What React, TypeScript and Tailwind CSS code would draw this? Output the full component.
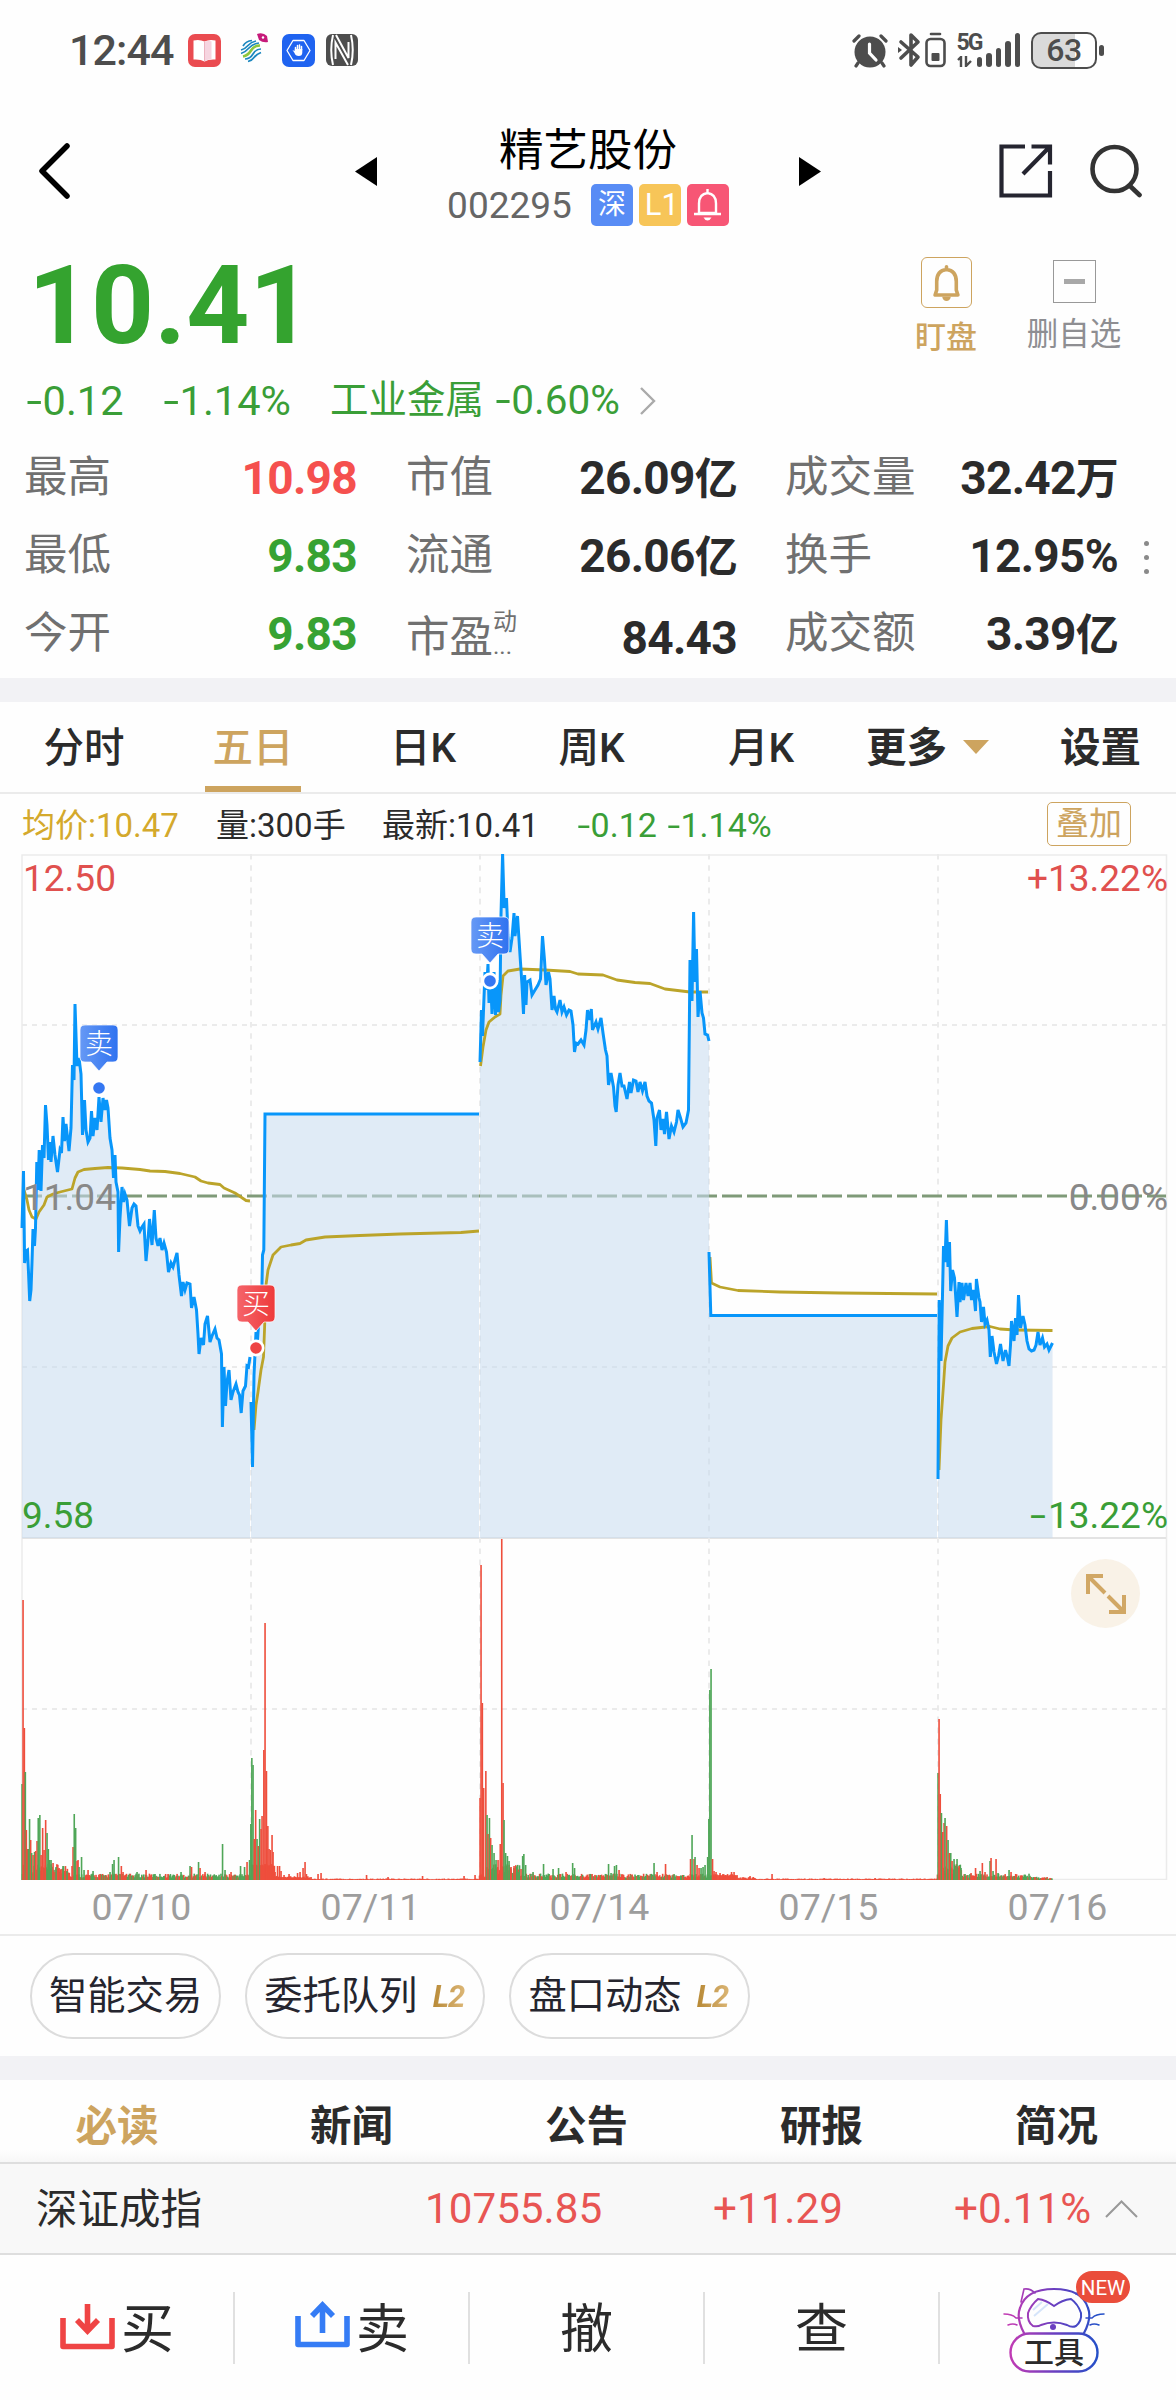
import type { ReactNode } from "react";

type Pt = [number, number];

// chart space is in page pixels: x 22..1166, price pane 854..1538, volume pane 1538..1880
const prices: Pt[][] = [
  [
    [22, 1228], [23.5, 1171], [24.6, 1263], [26, 1251], [27.5, 1250], [28.5, 1272], [29.7, 1301], [31, 1290], [32, 1262], [33, 1229], [34.5, 1246], [35.5, 1228],
    [36.8, 1162], [38, 1190], [39.2, 1150], [41, 1191], [42.5, 1145], [44, 1158], [45.5, 1105], [47, 1125], [48.5, 1160], [50, 1142], [51, 1162], [53, 1136],
    [55, 1155], [57.5, 1172], [60, 1150], [61.5, 1153], [63, 1117], [64.5, 1141], [66, 1124], [69, 1151], [71, 1128], [72.5, 1065], [74, 1080], [75, 1004],
    [77, 1066], [79, 1058], [81, 1074], [82.5, 1135], [84.5, 1100], [86, 1130], [88, 1142], [90, 1138], [91.5, 1111], [93, 1136], [95, 1118], [97, 1130],
    [99, 1097], [101, 1122], [103, 1098], [105, 1110], [106.5, 1100], [108, 1108], [110, 1138], [112, 1150], [113.5, 1178], [115, 1155], [116, 1182], [118, 1192],
    [118.6, 1252], [120, 1218], [122, 1187], [123.5, 1202], [125, 1194], [127, 1200], [129.5, 1226], [132, 1208], [134, 1204], [136, 1206], [138, 1226],
    [140, 1231], [142, 1227], [144, 1224], [146, 1261], [148, 1240], [149.5, 1219], [152, 1245], [154.3, 1210], [156, 1238], [158, 1246], [160, 1238], [162, 1250],
    [164, 1243], [166.5, 1252], [168.5, 1272], [171, 1263], [173, 1267], [175, 1260], [177, 1253], [179, 1275], [181.5, 1296], [183, 1282], [185, 1290],
    [187, 1283], [190, 1284], [191.5, 1308], [194, 1297], [196.5, 1310], [198, 1334], [199, 1354], [201, 1338], [203.5, 1345], [205, 1324], [207.5, 1316],
    [210, 1342], [212, 1336], [215, 1329], [217, 1338], [219, 1340], [221.5, 1354], [222.4, 1427], [224, 1367], [225.5, 1406], [227, 1382], [229, 1370],
    [231, 1400], [233, 1392], [236, 1384], [238, 1392], [239.5, 1395], [241.2, 1413], [243, 1391], [245.5, 1386], [247, 1366], [248.5, 1367], [250, 1357],
  ],
  [[251, 1402], [252.5, 1467], [254, 1375], [256, 1332], [257.5, 1340], [259, 1318], [260.5, 1322], [262, 1284], [262.5, 1255], [263.8, 1250], [265, 1114], [479, 1114]],
  [
    [480, 1062], [481.5, 1010], [482.5, 1036], [485, 972], [486.5, 990], [488, 964], [489, 1003], [490.5, 976], [492, 1014], [494, 972], [495.5, 1015], [497, 980],
    [498.5, 1012], [500, 1000], [501, 915], [502.6, 854], [504.2, 908], [506.5, 898], [508, 935], [510, 952], [512, 938], [514, 913], [515, 936], [517.5, 916],
    [520, 955], [522, 985], [523.5, 1014], [524.6, 975], [526, 1005], [527, 982], [530, 980], [532, 995], [535, 990], [538, 985], [540.5, 979], [542.5, 936],
    [544.5, 960], [546, 985], [548.5, 972], [550, 979], [552, 1010], [554, 996], [555.5, 1009], [557, 1012], [560, 1000], [562, 1012], [564, 1007], [566.5, 1015],
    [569, 1010], [571, 1011], [573, 1025], [574.5, 1052], [576, 1043], [578, 1044], [581, 1040], [584, 1045], [586, 1030], [587.5, 1010], [590, 1020], [591.3, 1009],
    [592.5, 1030], [596, 1022], [598, 1029], [601, 1018], [603, 1033], [605.5, 1050], [607, 1056], [608.5, 1085], [611, 1073], [613.5, 1087], [615, 1106],
    [616.2, 1112], [618, 1085], [620, 1073], [622, 1086], [624, 1086], [627, 1099], [629.5, 1082], [631, 1093], [633.5, 1080], [636, 1081], [638, 1092], [640, 1082],
    [642.5, 1091], [645, 1082], [647, 1096], [649, 1101], [651.5, 1103], [654, 1120], [655.8, 1146], [657, 1118], [659.5, 1110], [661, 1130], [663, 1119], [664.5, 1134],
    [666.5, 1112], [669, 1139], [671.5, 1126], [674, 1132], [676.5, 1122], [678, 1110], [680.5, 1118], [683, 1127], [686, 1123], [688.5, 1110], [690, 960],
    [692, 1001], [693.6, 912], [695, 982], [696.5, 949], [698, 1017], [700, 991], [702, 1013], [703.5, 1018], [705, 1034], [707.5, 1035], [709, 1041],
  ],
  [[709, 1252], [710.8, 1315.5], [937, 1315.5]],
  [
    [938, 1479], [939.2, 1300], [941, 1361], [942.5, 1295], [943.5, 1246], [945, 1262], [946.4, 1220], [948, 1267], [949.5, 1242], [950.7, 1291], [952.5, 1270],
    [954.5, 1278], [957, 1317], [959, 1282], [960, 1302], [962, 1283], [963.5, 1300], [966, 1283], [968, 1296], [970, 1283], [971.5, 1300], [973.5, 1290],
    [975.5, 1311], [976.4, 1279], [979, 1298], [980, 1302], [981.5, 1322], [983.5, 1307], [985, 1324], [987, 1320], [989, 1330], [990.3, 1357], [992, 1336],
    [994, 1352], [996.5, 1364], [998.5, 1356], [1000.5, 1344], [1003, 1361], [1005.5, 1350], [1007.5, 1358], [1009, 1366], [1010.5, 1345], [1011.5, 1321],
    [1014, 1341], [1015.5, 1318], [1017, 1335], [1018.5, 1295], [1020.5, 1328], [1023, 1316], [1025, 1325], [1027, 1341], [1029, 1349], [1031.5, 1351],
    [1034, 1350], [1036, 1345], [1038, 1332], [1040, 1345], [1042.5, 1338], [1044.5, 1347], [1047, 1344], [1049, 1350], [1052.5, 1343],
  ],
];

const averages: Pt[][] = [
  [
    [24, 1190], [27, 1200], [29, 1210], [32, 1217], [36, 1219], [39, 1212], [44, 1205], [47, 1197], [53, 1194], [60, 1192], [72, 1189], [75, 1178], [78, 1172], [84, 1169.5],
    [95, 1168.5], [108, 1167.5], [122, 1168], [140, 1169.5], [150, 1171], [165, 1171.5], [180, 1173.5], [195, 1177], [201, 1181], [208, 1183], [220, 1184.5],
    [224, 1188], [235, 1193], [246, 1200.5], [250, 1201],
  ],
  [
    [254, 1430], [256, 1405], [258, 1392], [261, 1370], [263.5, 1357], [264.5, 1330], [266, 1285], [268, 1270], [273, 1255], [281, 1247], [291, 1245], [300, 1243.5], [306, 1240],
    [325, 1237], [360, 1235.5], [400, 1234], [440, 1233], [461, 1232.5], [479, 1231],
  ],
  [
    [480.5, 1066], [483, 1047], [486, 1030], [489, 1022], [495, 1017], [500, 1014], [501, 995], [503, 976], [508, 971], [520, 969], [545, 970], [570, 971.5],
    [578, 974], [603, 975], [617, 980], [635, 982.5], [650, 983.5], [665, 989], [690, 992], [708, 992],
  ],
  [[710, 1257], [711.5, 1283], [720, 1287], [738, 1290.5], [780, 1292], [840, 1293], [937, 1294]],
  [
    [939, 1470], [941, 1420], [943.5, 1385], [945, 1362], [948, 1346], [952, 1338], [960, 1332], [972, 1328.5], [990, 1326.5], [1000, 1329], [1015, 1330], [1052.5, 1330.5],
  ],
];

// [x, height, up]
const spikes: [number, number, 0 | 1][] = [
  [22, 96, 0], [23, 280, 1], [24.3, 152, 1], [25.3, 108, 0], [26.3, 50, 1], [27.5, 31, 1], [28.5, 31, 0], [29.5, 61, 0], [30.6, 40, 1], [31.6, 27, 0], [33, 25, 1], [34.5, 28, 0],
  [35.6, 29, 1], [37, 39, 1], [38.2, 62, 0], [39.8, 65, 0], [41, 25, 1], [42.6, 52, 1], [44, 30, 1], [45.6, 60, 1], [47, 47, 0], [48.3, 31, 0], [49.6, 20, 0], [51, 20, 0], [53, 17, 1], [56, 13, 0],
  [59, 12, 1], [61, 11, 1], [63, 14, 0], [67, 9, 0], [72, 14, 1], [73, 33, 1], [74.2, 66, 0], [75.6, 52, 0], [77, 19, 1], [78, 20, 1], [79, 13, 0], [81.5, 23, 0], [84, 10, 0], [88, 10, 1], [93, 9, 0], [100, 6, 1],
  [110, 8, 0], [112.5, 16, 0], [114, 20, 0], [118.5, 23, 0], [121.3, 14, 1], [123, 8, 1], [137, 8, 0], [146, 10, 1], [155, 6, 0], [168, 6, 1], [181, 8, 0], [190, 14, 0], [191.5, 13, 1],
  [198.5, 18, 0], [200, 12, 1], [205, 8, 1], [222.5, 36, 0], [225, 10, 0], [231, 8, 1], [240.5, 14, 0], [244.5, 13, 0], [247, 18, 1], [249.5, 20, 0],
  [250.8, 56, 0], [251.8, 122, 0], [253, 115, 0], [254.2, 41, 1], [255.6, 70, 1], [257, 41, 0], [258.2, 34, 1], [259.6, 61, 0], [261, 51, 1], [262, 64, 1], [263.8, 130, 1],
  [265, 257, 1], [266.4, 109, 1], [267.8, 54, 1], [269, 31, 1], [270.3, 30, 1], [272, 45, 1], [273, 28, 1], [275, 8, 1], [277.5, 14, 1], [279.5, 14, 1], [281, 9, 1], [284, 5, 1], [289, 6, 1],
  [297.5, 7, 1], [300, 8, 1], [303, 12, 1], [305, 18, 1], [306.4, 6, 1], [311, 3, 1], [318, 6, 1], [321, 7, 1], [366.5, 5, 1], [388, 3, 1], [422.5, 4, 1], [464, 4, 1], [475, 5, 1],
  [480, 82, 1], [481, 315, 1], [482.3, 177, 1], [483.6, 92, 1], [485.8, 109, 1], [487, 65, 0], [488, 46, 1], [489.4, 62, 0], [490.6, 42, 1], [492, 35, 0], [494, 27, 0], [496, 20, 0], [498, 20, 1],
  [500.2, 36, 1], [501.7, 341, 1], [503, 97, 1], [504, 60, 0], [505.6, 27, 0], [507.4, 24, 0], [509, 19, 0], [511, 13, 1], [514, 14, 1], [518, 8, 0], [521, 11, 1], [522.6, 24, 0], [523.8, 26, 0], [525.6, 15, 0],
  [533, 8, 0], [543.5, 16, 0], [553, 11, 0], [558.5, 12, 0], [566, 8, 1], [572.6, 17, 0], [574.5, 12, 0], [608.5, 16, 0], [611, 7, 0], [614.5, 14, 0], [616.4, 15, 0], [619, 10, 1],
  [654, 17, 0], [657, 8, 1], [665.5, 16, 1], [690.5, 21, 1], [692, 45, 0], [694, 21, 1], [695, 23, 0], [697, 15, 1], [699, 12, 1], [701, 12, 0], [703, 13, 0], [705, 15, 0], [707.6, 23, 0],
  [708.8, 61, 0], [709.8, 190, 0], [711, 211, 0], [712.5, 21, 1], [714, 9, 1], [716, 8, 1], [720, 7, 1], [725, 5, 1], [731.5, 8, 1], [734, 8, 1], [750, 4, 1], [772, 6, 1], [824, 2, 1], [875, 2, 1],
  [938, 107, 0], [939, 161, 1], [940.2, 86, 1], [941.4, 67, 0], [942.7, 48, 1], [944, 57, 1], [945, 62, 0], [946.6, 54, 1], [948, 40, 0], [949.4, 27, 1], [950.7, 27, 0], [952, 19, 1], [954, 21, 0],
  [957, 21, 0], [959, 14, 1], [961, 12, 0], [965, 6, 0], [971, 7, 1], [975.5, 12, 1], [980, 9, 0], [982.3, 17, 1], [985, 8, 1], [990, 19, 0], [991, 22, 1], [993, 9, 0], [996, 21, 1], [998, 7, 0], [1009, 10, 0], [1011, 8, 1],
];

function floorBars() {
  const bars: [number, number, 0 | 1][] = [];
  for (let i = 0; i < 1080; i++) {
    const x = 22.5 + i * 0.954;
    const r = Math.abs(Math.sin(i * 12.9898) * 43758.5453) % 1;
    const flat = (x > 310 && x < 479) || (x > 757 && x < 937);
    const ramp = (x < 70 || (x > 487 && x < 520) || (x > 940 && x < 962)) ? 10 : (x > 1030 ? 2 : 4);
    if (flat) bars.push([x, 0.5 + r, 1]);
    else if (x > 251 && x < 310) bars.push([x, (x < 275 ? 14 : 2) + r * 2, 1]);
    else if (x > 712 && x < 757) bars.push([x, (x < 738 ? 4 : 1) + r * 2, 1]);
    else bars.push([x, ramp * 0.6 + r * ramp, Math.floor(r * 97) % 2 ? 1 : 0]);
  }
  return bars;
}

const volumes = [...floorBars(), ...spikes];
const line = (pts: Pt[]) => pts.map(([x, y], i) => `${i ? "L" : "M"}${x} ${y}`).join("");
const area = (pts: Pt[]) => `${line(pts)}V1538H${pts[0][0]}Z`;

const stats = [
  [["最高", "10.98", "text-[#f5504e]"], ["市值", "26.09亿", "text-[#2b2b2b]"], ["成交量", "32.42万", "text-[#2b2b2b]"]],
  [["最低", "9.83", "text-[#37a233]"], ["流通", "26.06亿", "text-[#2b2b2b]"], ["换手", "12.95%", "text-[#2b2b2b]"]],
  [["今开", "9.83", "text-[#37a233]"], ["市盈", "84.43", "text-[#2b2b2b]"], ["成交额", "3.39亿", "text-[#2b2b2b]"]],
];

// negative number with a wide minus sign
function Neg({ children }: { children: ReactNode }) {
  return (
    <>
      <span className="inline-block w-[0.4em] text-center scale-x-[1.35]">-</span>
      {children}
    </>
  );
}

function StatusBar() {
  return (
    <div className="h-[100px] flex items-center pl-[69px] pr-[72px] text-[#4d4d4d]">
      <span className="text-[43px] leading-none w-[119px] tracking-[-0.9px] font-medium">12:44</span>
      <svg className="w-[33px] h-[33px]" viewBox="0 0 33 33">
        <rect width="33" height="33" rx="7" fill="#ea4b50" />
        <path d="M5.500 6.500q6-1.500 11 1q5-2.500 11-1v19q-7-.5-11 2q-4-2.500-11-2z" fill="#fff" />
        <path d="M16.500 7.500v20q4-2.500 7-2.300v-18q-4-.7-7 .3z" fill="#f6d5e0" />
        <path d="M16.500 7.500v20" stroke="#e9a4b4" strokeWidth=".8" />
      </svg>
      <svg className="w-[30px] h-[34px] ml-[18px]" viewBox="0 0 30 34" fill="none">
        <path d="M18 1q6-2 10 2l1 6q-5 1-9-2z" fill="#c61a7a" />
        <circle cx="24" cy="4.500" r="1.200" fill="#fff" />
        <path d="M4 13q3-5 9-5.500M2 17q4-1 7-4.500t8-4.500M2 20.500q4-1 8-5.500t10-5" stroke="#1b87bf" strokeWidth="1.700" />
        <path d="M4 23.500q5-1 8-6t9-5" stroke="#8dc63f" strokeWidth="2.600" />
        <path d="M6 26q5 0 8-5t8-5M9 28.500q4-1 6-4t7-5" stroke="#1b87bf" strokeWidth="1.700" />
      </svg>
      <svg className="w-[33px] h-[33px] ml-[13px]" viewBox="0 0 33 33">
        <rect width="33" height="33" rx="7" fill="#1f63f0" />
        <path d="M11 6.500h11l6 10L22 26.500H11L5 16.500z" fill="none" stroke="#fff" strokeWidth="1.300" strokeLinejoin="round" />
        <path d="M13.500 16v-2.500M15.500 15.500v-4M17.500 15.500v-4.500M19.500 16v-3.500" stroke="#fff" strokeWidth="1.500" strokeLinecap="round" />
        <path d="M10.500 16l2 1 .5-2h7.300v3.500q0 3.500-3.500 3.500t-4.300-3z" fill="#fff" />
      </svg>
      <svg className="w-[32px] h-[32px] ml-[11px]" viewBox="0 0 32 32">
        <rect width="32" height="32" rx="6" fill="#4d4d4d" />
        <path d="M7 1q-3.500 15 0 30M25 1q3.500 15 0 30M10 1l12.500 23V8M22 31L9.500 8.500V25" fill="none" stroke="#fff" strokeWidth="2" />
      </svg>
      <svg className="w-[36px] h-[35px] ml-auto" viewBox="0 0 36 35" fill="none" stroke="#4d4d4d" strokeWidth="3.200" strokeLinecap="round">
        <circle cx="18" cy="19" r="15.500" fill="#4d4d4d" stroke="none" />
        <path d="M2 8l5-5M34 8l-5-5M6 30l-2 3M30 30l2 3" />
        <path d="M17.500 11v9l6.500 7" stroke="#fff" />
      </svg>
      <svg className="w-[50px] h-[36px] ml-[10px]" viewBox="0 0 50 36" fill="none" stroke="#4d4d4d" strokeWidth="3.600" strokeLinecap="round" strokeLinejoin="round">
        <path d="M3 10l17 15-7 8V3l7 7L3 26" />
        <path d="M0 15l4 3-4 3z" fill="#4d4d4d" stroke="none" />
        <rect x="28.500" y="7" width="18" height="27" rx="4" strokeWidth="2.600" />
        <path d="M33 2h9" strokeWidth="2.600" />
        <rect x="33.500" y="21" width="8" height="8" rx="1" fill="#4d4d4d" stroke="none" />
      </svg>
      <div className="flex flex-col ml-[9px] h-[34px] w-[24px]">
        <span className="text-[23px] leading-[19px] font-bold tracking-[-2px]">5G</span>
        <svg className="w-[15px] h-[11px] mt-[4px]" viewBox="0 0 15 11" fill="none" stroke="#4d4d4d" strokeWidth="2.400">
          <path d="M1 4l3-3v10M9 0v10l5-5" />
        </svg>
      </div>
      <div className="flex items-end gap-[4px] h-[34px] -ml-[4px]">
        <i className="w-[5.500px] h-[10px] rounded-full bg-[#4d4d4d]" />
        <i className="w-[5.500px] h-[14px] rounded-full bg-[#4d4d4d]" />
        <i className="w-[5.500px] h-[19px] rounded-full bg-[#4d4d4d]" />
        <i className="w-[5.500px] h-[26px] rounded-full bg-[#4d4d4d]" />
        <i className="w-[5.500px] h-[34px] rounded-full bg-[#4d4d4d]" />
      </div>
      <div className="ml-[11px] w-[66px] h-[37px] rounded-[10px] border-[2.500px] border-[#4d4d4d] bg-linear-to-r from-[#dadada] from-68% to-white to-68% flex items-center justify-center">
        <span className="text-[32px] leading-none font-medium tracking-[-0.5px]">63</span>
      </div>
      <i className="ml-[2px] w-[5px] h-[11px] rounded-full bg-[#4d4d4d]" />
    </div>
  );
}

function Bell({ className }: { className: string }) {
  return (
    <svg className={className} viewBox="0 0 30 34" fill="none" stroke="currentColor" strokeWidth="3.300" strokeLinejoin="round" strokeLinecap="round">
      <path d="M15 2.500v2.500M15 5q-9 1-9 11v8l-1.500 4.500h21L24 24v-8q0-10-9-11z" />
      <path d="M11 30h8q-1 4-4 4t-4-4z" fill="currentColor" stroke="none" />
    </svg>
  );
}

function Header() {
  return (
    <header className="h-[142px] flex items-center">
      <svg className="w-[34px] h-[58px] ml-[37px]" viewBox="0 0 34 58" fill="none" stroke="#000" strokeWidth="5.500" strokeLinecap="round" strokeLinejoin="round">
        <path d="M30 4L5 29l25 25" />
      </svg>
      <svg className="w-[22px] h-[29px] ml-[284px]" viewBox="0 0 22 29">
        <path d="M22 0v29L0 14.500z" />
      </svg>
      <div className="ml-[63px] mt-[9px] w-[296px] flex flex-col items-center">
        <h1 className="text-[44.500px] leading-[50px] text-black">精艺股份</h1>
        <div className="mt-[8px] h-[42px] flex items-center gap-[6px] text-white">
          <span className="text-[37px] leading-none text-[#666] mr-[13px] pt-[2px]">002295</span>
          <span className="w-[42px] h-[42px] rounded-[5px] bg-[#588cf5] flex items-center justify-center text-[28px] leading-none">深</span>
          <span className="w-[42px] h-[42px] rounded-[5px] bg-[#f7c558] flex items-center justify-center text-[31px] leading-none pl-[4px]">L1</span>
          <span className="w-[42px] h-[42px] rounded-[5px] bg-[#f75675] flex items-center justify-center">
            <svg className="w-[27px] h-[32px]" viewBox="0 0 27 32" fill="none" stroke="#fff" strokeWidth="2.400">
              <path d="M13.500 0v4M13.500 4q-8.500 1-8.500 10.500V24h17v-9.500Q22 5 13.500 4zM0 25h27" />
              <path d="M9.500 28.500h8q-1.500 3-4 3t-4-3z" fill="#fff" stroke="none" />
            </svg>
          </span>
        </div>
      </div>
      <svg className="w-[22px] h-[29px] ml-[63px]" viewBox="0 0 22 29">
        <path d="M0 0v29l22-14.500z" />
      </svg>
      <svg className="w-[54px] h-[54px] ml-[178px]" viewBox="0 0 54 54" fill="none" stroke="#252530" strokeWidth="4.200">
        <path d="M26 2.500H2.500v49h48.500V27M32.500 2.500H51v18M51 2.500L24 30" />
      </svg>
      <svg className="w-[54px] h-[54px] ml-[37px]" viewBox="0 0 54 54" fill="none" stroke="#333" strokeWidth="4.600" strokeLinecap="round">
        <circle cx="24.500" cy="25" r="22" />
        <path d="M40 42l9.500 9" />
      </svg>
    </header>
  );
}

function Quote() {
  return (
    <section>
      <div className="h-[125px] flex items-start pl-[28px]">
        <div className="text-[110px] leading-[128px] font-bold text-[#34a32f] w-[882px]">10.41</div>
        <div className="w-[72px] pt-[15px] flex flex-col items-center text-[#cda45f]">
          <span className="w-[51px] h-[51px] rounded-[6px] border border-[#cda45f] flex items-center justify-center">
            <Bell className="w-[33px] h-[37px]" />
          </span>
          <span className="mt-[14px] text-[31px] leading-none font-medium">盯盘</span>
        </div>
        <div className="ml-[41px] w-[102px] pt-[18px] flex flex-col items-center text-[#8e8e92]">
          <span className="w-[43px] h-[43px] border-[1.500px] border-[#999] flex items-center justify-center">
            <i className="w-[21px] h-[5px] bg-[#a8a8a8]" />
          </span>
          <span className="mt-[16px] text-[31.500px] leading-none">删自选</span>
        </div>
      </div>
      <div className="h-[66px] pt-[1px] flex items-center pl-[26px] text-[41.500px] leading-none text-[#3a9e37]">
        <span className="w-[137px]"><Neg>0.12</Neg></span>
        <span className="w-[167px]"><Neg>1.14%</Neg></span>
        <span className="text-[38.500px] w-[165px]">工业金属</span>
        <span className="w-[145px] text-[40.500px]"><Neg>0.60%</Neg></span>
        <svg className="w-[16px] h-[28px]" viewBox="0 0 16 28" fill="none" stroke="#aaa" strokeWidth="2.400">
          <path d="M1 1l13 13L1 27" />
        </svg>
      </div>
      <div className="flex mt-[6px] pb-[5px]">
        <div className="flex flex-col">
          {stats.map((row, r) => (
            <div key={r} className="h-[78px] flex items-center leading-none">
              {row.map(([label, value, color], c) => (
                <div key={label} className={c === 0 ? "w-[333px] ml-[24px] mr-[49px] flex items-center justify-between" : c === 1 ? "w-[331px] mr-[48px] flex items-center justify-between" : "w-[333px] flex items-center justify-between"}>
                  <span className="flex items-center text-[43.500px] text-[#707070]">
                    <span className={label === "市盈" ? "pt-[7px]" : ""}>{label}</span>
                    {label === "市盈" && (
                      <span className="flex flex-col text-[24px] leading-[24px] -mt-[1px]">
                        <span>动</span>
                        <span className="h-[24px]">...</span>
                      </span>
                    )}
                  </span>
                  <span className={`text-[46px] tracking-[-0.7px] font-bold ${color} ${label === "市盈" ? "pt-[8px]" : ""}`}>
                    {value.replace(/[亿万]/, "")}
                    <span className="text-[43px]">{value.match(/[亿万]/)?.[0]}</span>
                  </span>
                </div>
              ))}
            </div>
          ))}
        </div>
        <div className="ml-[26px] mt-[102px] flex flex-col gap-[9px]">
          <i className="w-[5px] h-[5px] rounded-full bg-[#8a8a8a]" />
          <i className="w-[5px] h-[5px] rounded-full bg-[#8a8a8a]" />
          <i className="w-[5px] h-[5px] rounded-full bg-[#8a8a8a]" />
        </div>
      </div>
    </section>
  );
}

function PeriodTabs() {
  return (
    <nav className="h-[92px] border-b-2 border-[#ebebeb] flex text-[40.500px] leading-[92px] font-medium text-[#2b2b2b]">
      <span className="w-[168px] text-center">分时</span>
      <span className="ml-[37px] w-[96px] text-center text-[#cda45f] border-b-[6px] border-[#cda45f] h-[90px]">五日</span>
      <span className="ml-[38px] w-[168px] text-center">日K</span>
      <span className="w-[169px] text-center">周K</span>
      <span className="w-[170px] text-center">月K</span>
      <span className="ml-[20px] font-bold">更多</span>
      <svg className="w-[26px] h-[14px] ml-[16px] mt-[38px]" viewBox="0 0 26 14">
        <path d="M0 0h26L13 14z" fill="#cda45f" />
      </svg>
      <span className="ml-[71px] font-bold">设置</span>
    </nav>
  );
}

function Flag({ x, y, dotY, buy }: { x: number; y: number; dotY: number; buy?: boolean }) {
  const fill = buy ? "url(#buy)" : "url(#sell)";
  return (
    <g>
      <circle cx={x} cy={dotY} r="8.500" fill="#fff" />
      <circle cx={x} cy={dotY} r="5.800" fill={buy ? "#ee4343" : "#3577f2"} />
      <path
        d={`M${x - 14} ${y}h28q5 0 5 5v27q0 5-5 5h-6l-8 9l-8-9h-6q-5 0-5-5v-27q0-5 5-5z`}
        fill={fill}
        stroke="#fff"
        strokeOpacity=".7"
        strokeWidth="1"
      />
      <text x={x} y={y + 29} fontSize="28" fontWeight="300" fill="#fff" textAnchor="middle">{buy ? "买" : "卖"}</text>
    </g>
  );
}

function Chart() {
  return (
    <div className="relative">
      <svg className="block w-[1176px] h-[1026px]" viewBox="0 854 1176 1026">
        <defs>
          <linearGradient id="sell"><stop stopColor="#6699f5" /><stop offset="1" stopColor="#2f72f0" /></linearGradient>
          <linearGradient id="buy"><stop stopColor="#f5646a" /><stop offset="1" stopColor="#ee3a3a" /></linearGradient>
        </defs>
        <g stroke="#ebebeb" strokeWidth="1.500" fill="none">
          <path d="M22 1880V855H1157H1166.500V1879.500H22" />
          <path d="M22 1538H1166" strokeWidth="2" stroke="#e3e3e3" />
          <path d="M251 854V1880M480 854V1880M709 854V1880M938 854V1880" strokeDasharray="5.600 5.600" strokeWidth="2" />
          <path d="M22 1025H1166M22 1367H1166M22 1709H1166" strokeDasharray="5 5" strokeWidth="2" />
        </g>
        <path d="M22 1196H1166" stroke="#7f9a78" strokeWidth="3" strokeDasharray="20 5" />
        {prices.map((pts, i) => (
          <path key={i} d={area(pts)} fill="#c8dcf0" fillOpacity=".57" />
        ))}
        {averages.map((pts, i) => (
          <path key={i} d={line(pts)} fill="none" stroke="#bba42a" strokeWidth="2.800" strokeLinejoin="round" />
        ))}
        {prices.map((pts, i) => (
          <path key={i} d={line(pts)} fill="none" stroke="#0896fa" strokeWidth="3" />
        ))}
        {volumes.map(([x, h, up], i) => (
          <rect key={i} x={x - 0.75} y={1880 - h} width="1.600" height={h} fill={up ? "#ee4e3c" : "#4fa658"} />
        ))}
        <Flag x={99} y={1025} dotY={1088} />
        <Flag x={490} y={917} dotY={981} />
        <Flag x={256} y={1285} dotY={1348} buy />
        <g fontSize="37">
          <text x="23" y="891" fill="#e0504e">12.50</text>
          <text x="1168" y="891" fill="#e0504e" textAnchor="end">+13.22%</text>
          <text x="23" y="1210" fill="#888">11.04</text>
          <text x="1168" y="1210" fill="#888" textAnchor="end">0.00%</text>
          <text x="22" y="1528" fill="#3a9e37">9.58</text>
          <text x="1168" y="1528" fill="#3a9e37" textAnchor="end">13.22%</text>
          <text x="1030" y="1528" fill="#3a9e37" textLength="16" lengthAdjust="spacingAndGlyphs">-</text>
        </g>
      </svg>
      <button className="absolute right-[36px] top-[705px] w-[69px] h-[69px] rounded-full bg-[#f9f2e7] flex items-center justify-center">
        <svg className="w-[42px] h-[42px]" viewBox="0 0 42 42" fill="none" stroke="#d1a764" strokeWidth="4">
          <path d="M18 3H3v18M3 3l17 17M24 39h15V22M39 39L23 23" />
        </svg>
      </button>
    </div>
  );
}

function Pill({ children, l2 }: { children: ReactNode; l2?: boolean }) {
  return (
    <button className="h-[86px] rounded-full border-2 border-[#dcdcdc] px-[17px] flex items-center text-[38.300px] leading-none text-[#25252e]">
      {children}
      {l2 && <span className="ml-[13px] w-[36px] text-[31px] tracking-[-1px] font-bold italic bg-linear-to-r from-[#b5862f] to-[#ddb878] bg-clip-text text-transparent">L2</span>}
    </button>
  );
}

function Tools() {
  return (
    <svg className="w-[110px] h-[110px]" viewBox="1000 2268 136 110" preserveAspectRatio="xMinYMid slice" fill="none" overflow="visible">
      <defs>
        <linearGradient id="cat" gradientUnits="userSpaceOnUse" x1="1010" y1="0" x2="1098" y2="0">
          <stop stopColor="#c13bb4" /><stop offset=".5" stopColor="#6b3fc0" /><stop offset="1" stopColor="#2450c8" />
        </linearGradient>
      </defs>
      <g stroke="url(#cat)" strokeWidth="2.200" strokeLinecap="round">
        <path d="M1024 2333Q1016 2318 1020 2308Q1026 2289 1054 2289Q1082 2289 1088 2308Q1092 2318 1084 2333" />
        <path d="M1021 2302L1024 2289Q1030 2288 1035 2293M1076 2294l6-4 2 9" strokeWidth="1.600" />
        <path d="M1038 2299q-7 6-10 14q-1 9 5 13q5 1 8-1q13-5 26 0q5 3 9 1q6-5 5-13q-3-9-10-14q-9 1-17 7q-8-6-16-7z" strokeWidth="2" />
        <path d="M1004 2314q8 0 12 4h6M1008 2325q5-2 9 0M1104 2314q-8 0-12 4h-6M1099 2325q-5-2-9 0" strokeWidth="1.500" />
      </g>
      <circle cx="1053" cy="2327" r="3" fill="#6b3fc0" />
      <path d="M1033 2310l9-8M1034 2316l14-12" stroke="#d5e4fa" strokeWidth="2" />
      <rect x="1010.500" y="2333.500" width="87" height="38" rx="19" fill="#fff" stroke="url(#cat)" strokeWidth="2.400" />
      <text x="1054" y="2363" fontSize="30" fontWeight="500" fill="#2b2b2b" textAnchor="middle">工具</text>
      <rect x="1076" y="2271" width="54" height="32" rx="16" fill="#ea4d3b" />
      <text x="1103" y="2294.500" fontSize="20.500" fill="#fff" textAnchor="middle">NEW</text>
    </svg>
  );
}

export default function App() {
  return (
    <main className="w-[1176px] h-[2400px] overflow-hidden bg-[#fefefe] font-['Roboto','Noto_Sans_CJK_SC',sans-serif]">
      <StatusBar />
      <Header />
      <Quote />
      <div className="h-[24px] bg-[#f2f2f5]" />
      <PeriodTabs />
      <div className="h-[60px] pt-[2px] flex items-center pl-[22px] text-[33px] leading-none text-[#2b2b2b] whitespace-nowrap">
        <span className="w-[194px] text-[#d4a92c]">均价:10.47</span>
        <span className="w-[166px]">量:300手</span>
        <span className="w-[195px]">最新:10.41</span>
        <span className="w-[470px] text-[34px] text-[#3a9e37] flex gap-[10px]"><span><Neg>0.12</Neg></span><span><Neg>1.14%</Neg></span></span>
        <button className="w-[84px] h-[44px] -mt-[2px] pb-[2px] rounded-[5px] border border-[#cda45f] text-[#cda45f] text-[33px] leading-none">叠加</button>
      </div>
      <Chart />
      <div className="h-[56px] border-b-2 border-[#ebebeb] pt-[2px] pl-[27px] flex items-center text-[37.500px] leading-none text-[#9d9d9d]">
        {["07/10", "07/11", "07/14", "07/15", "07/16"].map((d) => (
          <span key={d} className="w-[229px] text-center">{d}</span>
        ))}
      </div>
      <div className="h-[120px] flex items-center gap-[24px] pl-[30px]">
        <Pill>智能交易</Pill>
        <Pill l2>委托队列</Pill>
        <Pill l2>盘口动态</Pill>
      </div>
      <div className="h-[24px] bg-[#f2f2f5]" />
      <nav className="h-[82px] pt-[11px] flex items-center text-[41.500px] leading-none font-bold text-[#2b2b2b] bg-linear-to-b from-[#fefefe] from-85% to-[#f7f7f7]">
        {["必读", "新闻", "公告", "研报", "简况"].map((t, i) => (
          <span key={t} className={i === 0 ? "w-[234px] text-center text-[#cda45f]" : "w-[235px] text-center"}>{t}</span>
        ))}
      </nav>
      <div className="h-[93px] pt-[2px] border-y-2 border-[#dedede] bg-[#f8f8f8] flex items-center pl-[36px] text-[42.200px] leading-none text-[#e85553]">
        <span className="w-[389px] text-[41.500px] text-[#2b2b2b]">深证成指</span>
        <span className="w-[288px]">10755.85</span>
        <span className="w-[241px]">+11.29</span>
        <span className="w-[151px]">+0.11%</span>
        <svg className="w-[33px] h-[18px] -mt-[2px]" viewBox="0 0 33 18" fill="none" stroke="#999" strokeWidth="2">
          <path d="M1 17L16.500 1.500 32 17" />
        </svg>
      </div>
      <footer className="h-[145px] flex items-center text-[53px] leading-none text-[#2b2b2b]">
        <div className="w-[233px] pl-[60px] flex items-center gap-[6px]">
          <svg className="w-[55px] h-[46px] -mt-[1px]" viewBox="0 0 55 46" fill="none" stroke="#ef4444" strokeWidth="5.600">
            <path d="M3 14v28.500h49V14" strokeLinejoin="round" />
            <path d="M27.500 0v26M17 16l10.500 11L38 16" />
          </svg>
          <span className="pt-[5px]">买</span>
        </div>
        <i className="w-[2px] h-[72px] bg-[#e0e0e0]" />
        <div className="w-[233px] pl-[60px] flex items-center gap-[6px]">
          <svg className="w-[55px] h-[50px] -mt-[5px]" viewBox="0 0 55 50" fill="none" stroke="#357cf5" strokeWidth="5.600">
            <path d="M3 16v28.500h49V16" strokeLinejoin="round" />
            <path d="M27.500 33V5M17 16L27.500 5 38 16" />
          </svg>
          <span className="pt-[5px]">卖</span>
        </div>
        <i className="w-[2px] h-[72px] bg-[#e0e0e0]" />
        <div className="w-[233px] pt-[5px] text-center">撤</div>
        <i className="w-[2px] h-[72px] bg-[#e0e0e0]" />
        <div className="w-[233px] pt-[5px] text-center">查</div>
        <i className="w-[2px] h-[72px] bg-[#e0e0e0]" />
        <div className="w-[234px] pl-[60px] -mt-[9px]">
          <Tools />
        </div>
      </footer>
    </main>
  );
}
